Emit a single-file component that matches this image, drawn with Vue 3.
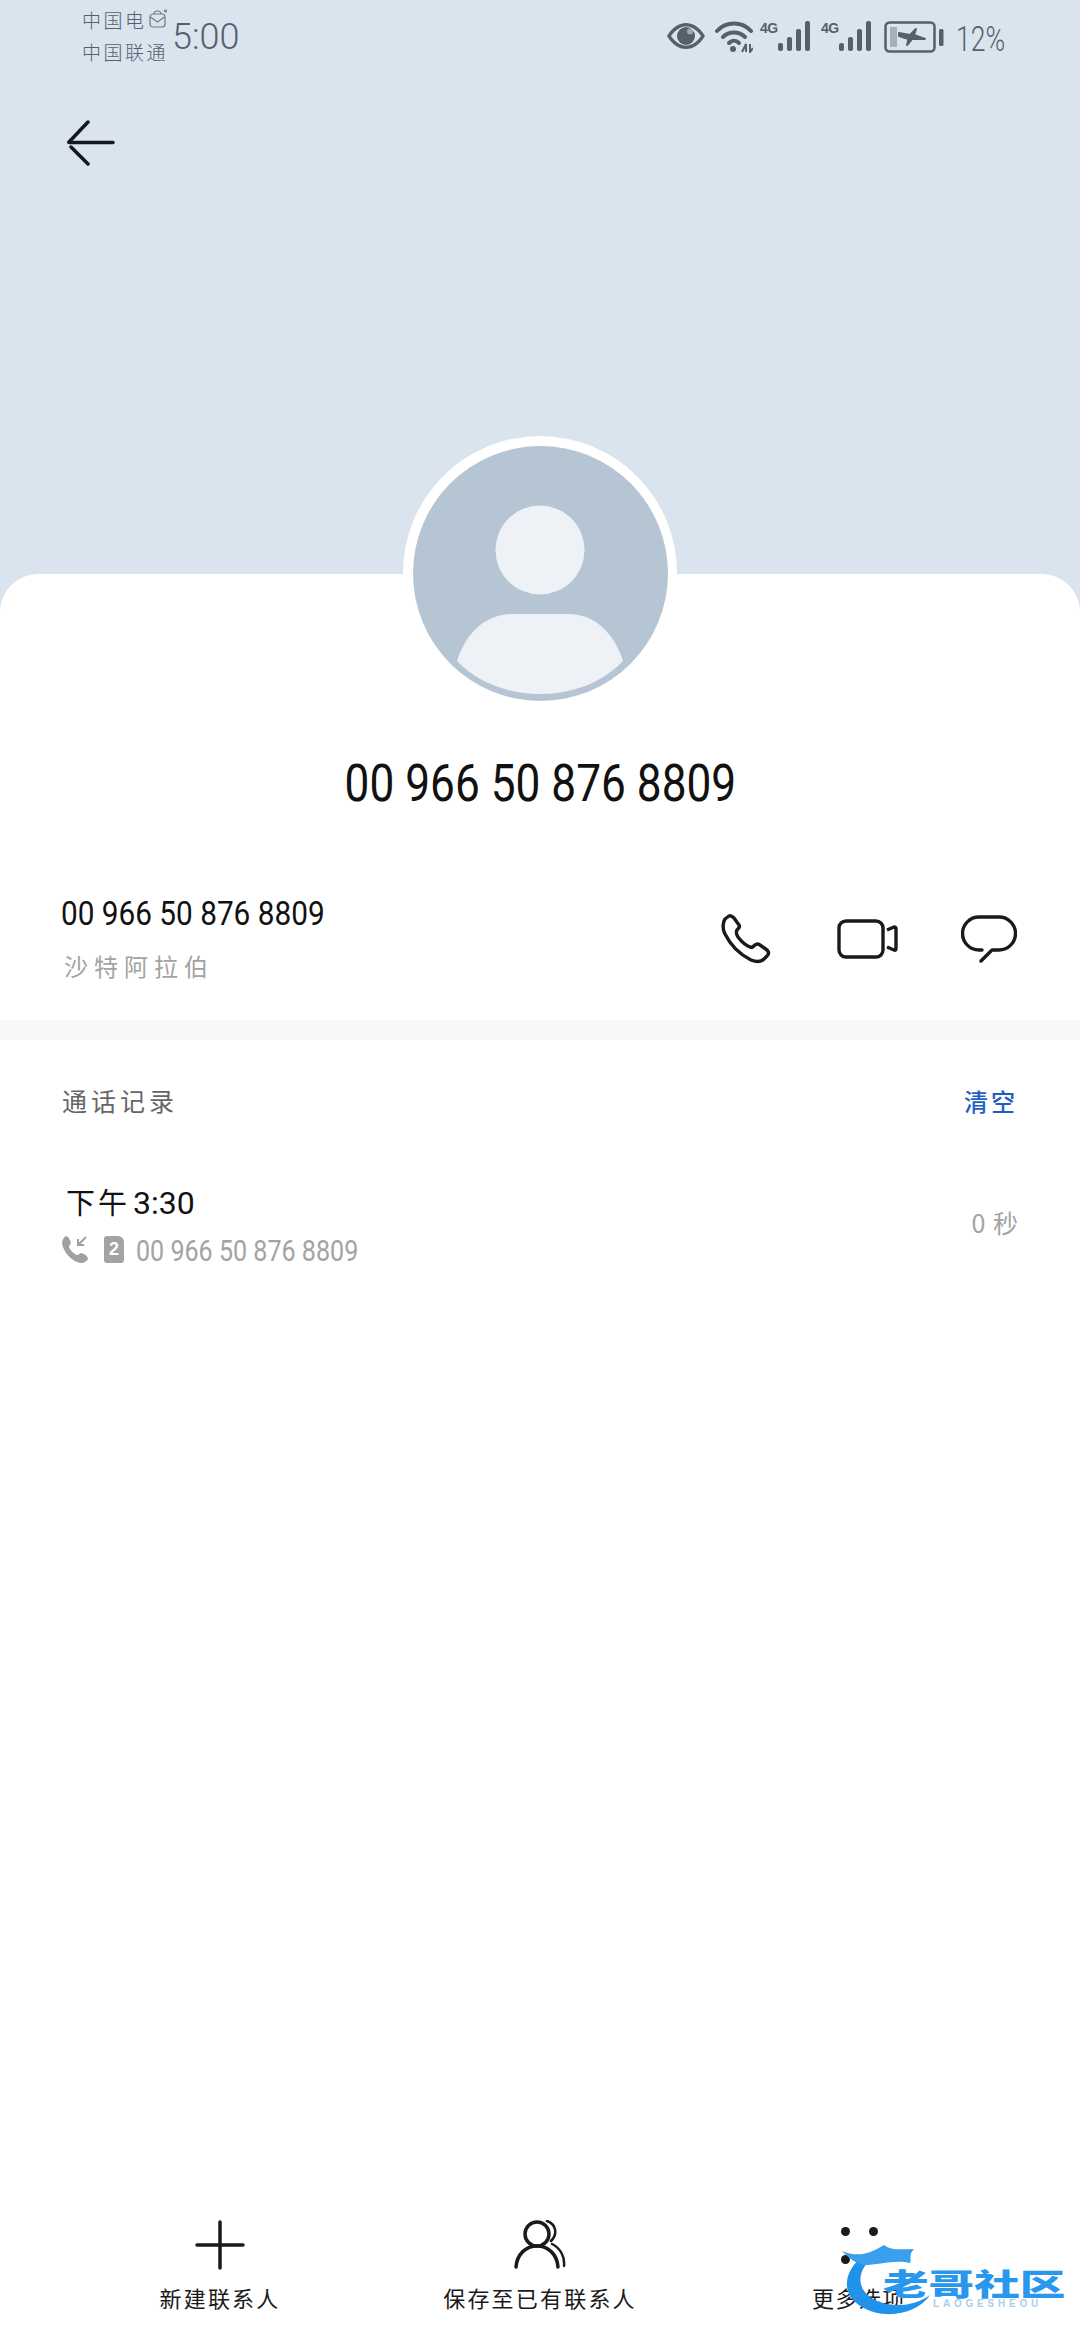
<script setup>
const number = '00 966 50 876 8809'
const bars = [8, 14, 22, 30]
</script>

<template>
  <div class="page">
    <header class="hero">
      <div class="status">
        <div class="carriers">
          <div class="carrier">
            <span>中国电</span>
            <svg class="mail" width="20" height="20" viewBox="0 0 20 20" fill="none" stroke="#6f7a85" stroke-width="1.2">
              <rect x="2" y="5" width="15" height="13" rx="3" />
              <path d="M2.5 8 L9.5 13 L16.5 8" />
              <circle cx="17.5" cy="2" r="1" />
              <path d="M6 5 a3.5 3 0 0 1 7 0" />
            </svg>
          </div>
          <div class="carrier">中国联通</div>
        </div>
        <div class="time">5:00</div>
        <div class="status-right">
          <svg class="eye" width="38" height="26" viewBox="0 0 38 26">
            <path d="M0 13 C6 3 13 0 19 0 C25 0 32 3 38 13 C32 23 25 26 19 26 C13 26 6 23 0 13 Z M4 13 C9 20 14 22.500 19 22.500 C24 22.500 29 20 34 13 C29 6 24 3.500 19 3.500 C14 3.500 9 6 4 13 Z" fill="#56606b" fill-rule="evenodd" />
            <circle cx="19" cy="13" r="9" fill="#56606b" />
            <circle cx="23" cy="8.500" r="3" fill="#d9e4ee" opacity=".55" />
          </svg>
          <svg class="wifi" width="38" height="33" viewBox="0 0 38 33" fill="none" stroke="#56606b" stroke-width="4" stroke-linecap="round">
            <path d="M2 11 C11 1 27 1 36 11" />
            <path d="M8 17 C14 11 24 11 30 17" />
            <path d="M14 23 C17 20 21 20 24 23" />
            <circle cx="18" cy="29" r="3" fill="#56606b" stroke="none" />
            <path d="M27 32 L31 24 V32 M35 24 V32 L38 28" stroke-width="2" stroke-linecap="butt" />
          </svg>
          <div v-for="n in 2" :key="n" class="signal">
            <span class="g4">4G</span>
            <div class="bars">
              <i v-for="h in bars" :key="h" class="bar" :style="{ height: h + 'px' }"></i>
            </div>
          </div>
          <svg class="battery" width="60" height="32" viewBox="0 0 60 32">
            <rect x="1.500" y="1.500" width="49" height="29" rx="4" fill="none" stroke="#56606b" stroke-width="2.500" />
            <rect x="6" y="6" width="7" height="20" fill="#a7b0b9" />
            <path d="M15 12 L26 14 L32 8 L30 14 L41 18 L28 18 L23 24 L24.500 18 L15 15 Z" fill="#56606b" stroke="#56606b" stroke-width="2" stroke-linejoin="round" />
            <rect x="55" y="8" width="4.500" height="17" rx="1.500" fill="#56606b" />
          </svg>
          <div class="percent"><span>12%</span></div>
        </div>
      </div>
      <svg class="back" width="50" height="46" viewBox="0 0 50 46" fill="none" stroke="#14181c" stroke-width="3.500" stroke-linecap="round">
        <path d="M3 22.500 H47" />
        <path d="M3 22 L22 2" />
        <path d="M5 27 L22 44" />
      </svg>
    </header>

    <main class="panel">
      <div class="avatar-ring">
        <svg width="255" height="255" viewBox="0 0 255 255">
          <circle cx="127.500" cy="127.500" r="127.500" fill="#b6c5d4" />
          <circle cx="127" cy="104" r="44.500" fill="#eef2f6" />
          <path d="M44 215 C52 190 70 168 100 168 H155 C184 168 202 190 210 215 C190 236 160 248 127.500 248 C95 248 64 236 44 215 Z" fill="#eef2f6" />
        </svg>
      </div>

      <h1 class="title"><span class="squeeze center">{{ number }}</span></h1>

      <section class="contact">
        <div class="contact-text">
          <div class="contact-num"><span class="squeeze">{{ number }}</span></div>
          <div class="region">沙特阿拉伯</div>
        </div>
        <div class="actions">
          <svg width="50" height="50" viewBox="0 0 50 50" fill="none" stroke="#1a1a1a" stroke-width="3.400" stroke-linejoin="round">
            <path d="M8 2 C10 1 12 3 13 4 L18 11 C19 13 18 14 16 16 C15 18 15 20 17 23 C20 27 24 31 29 33 C31 34 32 33 34 31 C36 30 37 29 39 31 L46 36 C48 38 48 40 46 42 L43 45 C40 48 35 48 30 46 C20 41 10 32 4 20 C1 14 2 8 4 5 Z" />
          </svg>
          <svg class="video" width="61" height="40" viewBox="0 0 61 40" fill="none" stroke="#1a1a1a" stroke-width="3.400" stroke-linejoin="round">
            <rect x="2" y="2" width="44" height="36" rx="7" />
            <path d="M50 11 L57 8 Q59 8 59 10 V29 Q59 32 57 31 L50 28" />
          </svg>
          <svg width="56" height="48" viewBox="0 0 56 48" fill="none" stroke="#1a1a1a" stroke-width="3.400" stroke-linecap="round" stroke-linejoin="round">
            <path d="M21 35 H18 A16.500 16.500 0 0 1 18 2 H38 A16.500 16.500 0 0 1 38 35 H31 L20 46" />
          </svg>
        </div>
      </section>

      <div class="band"></div>

      <section class="log-head">
        <span class="log-title">通话记录</span>
        <span class="clear">清空</span>
      </section>

      <section class="log-row">
        <div>
          <div class="log-time">下午<span class="log-clock">3:30</span></div>
          <div class="log-meta">
            <svg width="27" height="27" viewBox="0 0 27 27" fill="#a0a0a0">
              <path d="M4 0 C6 0 8 4 9 6 C9 8 7 9 7 11 C8 14 12 18 15 19 C17 19 18 17 20 17 C22 18 26 20 26 23 C25 25 22 27 19 27 C10 26 1 16 0 7 C0 4 2 1 4 0 Z" />
              <path d="M24 1 L16 9 M16 3 V9 H22" fill="none" stroke="#a0a0a0" stroke-width="2" />
            </svg>
            <span class="sim">2</span>
            <span class="log-num"><span class="squeeze">{{ number }}</span></span>
          </div>
        </div>
        <div class="duration">0 秒</div>
      </section>

      <nav class="bottom">
        <div class="tool tool-new">
          <svg width="50" height="50" viewBox="0 0 50 50" stroke="#1a1a1a" stroke-width="3.500" stroke-linecap="round">
            <path d="M25 2 V48 M2 25 H48" />
          </svg>
          <span>新建联系人</span>
        </div>
        <div class="tool tool-save">
          <svg width="52" height="50" viewBox="0 0 52 50" fill="none" stroke="#1a1a1a" stroke-width="3.500" stroke-linecap="round">
            <circle cx="23" cy="14" r="12" />
            <path d="M2 47 C3 34 12 26 23 26 C34 26 43 34 44 47" />
            <path d="M33 1 C42 4 44 14 37 21" stroke-width="2.500" />
            <path d="M38 24 C46 28 51 36 50 46" stroke-width="2.500" />
          </svg>
          <span>保存至已有联系人</span>
        </div>
        <div class="tool tool-more">
          <div class="dots"><i></i><i></i><i></i><i></i></div>
          <span>更多选项</span>
        </div>
      </nav>
    </main>

    <div class="watermark">
      <svg width="100" height="76" viewBox="0 0 100 76">
        <path d="M22 12 C6 24 -2 48 22 62 C46 76 78 68 90 50 C74 62 48 64 30 52 C16 42 18 24 32 14 Z" fill="#2192ea" />
        <path d="M2 6 C20 14 34 6 44 0 C52 6 62 4 74 4 C68 10 72 14 70 18 C56 14 38 20 24 20 C14 18 8 12 2 6 Z" fill="#3aa0ee" />
      </svg>
      <div class="wm-name">老哥社区</div>
      <div class="wm-latin">LAOGESHEOU</div>
    </div>
  </div>
</template>

<style scoped>
.page {
  position: relative;
  width: 1080px;
  height: 2340px;
  display: flex;
  flex-direction: column;
  background: #d9e4ee;
  overflow: hidden;
  font-family: "Noto Sans CJK SC", "Noto Sans", sans-serif;
  font-weight: 400;
}
.hero {
  height: 574px;
  flex: none;
  display: flex;
  flex-direction: column;
}
.status {
  height: 72px;
  box-sizing: border-box;
  display: flex;
  align-items: flex-start;
  padding: 4px 75px 0 82px;
  color: #56606b;
}
.carriers {
  width: 90px;
  flex: none;
  font-size: 19px;
  font-weight: 300;
  line-height: 32px;
  letter-spacing: 2.500px;
  white-space: nowrap;
}
.carrier {
  display: flex;
  align-items: center;
  gap: 1px;
}
.mail {
  margin-top: -3px;
}
.time {
  font-family: Roboto, sans-serif;
  font-weight: 300;
  font-size: 36px;
  line-height: 42px;
  margin-top: 12px;
}
.status-right {
  margin-left: auto;
  display: flex;
  align-items: flex-start;
  padding-top: 16px;
}
.eye {
  margin-top: 3px;
}
.wifi {
  margin-left: 10px;
}
.signal {
  display: flex;
  width: 51px;
  margin-left: 7px;
  align-items: flex-start;
}
.signal + .signal {
  margin-left: 10px;
}
.g4 {
  width: 18px;
  font-family: "Liberation Sans", sans-serif;
  font-weight: 700;
  font-size: 14px;
  line-height: 14px;
  letter-spacing: -.5px;
  margin-top: 1px;
}
.bars {
  display: flex;
  align-items: flex-end;
  gap: 4px;
  height: 31px;
}
.bar {
  width: 5px;
  background: #56606b;
  border-radius: 2px;
}
.battery {
  margin-left: 12px;
  margin-top: 1px;
}
.percent {
  width: 49px;
  margin-left: 12px;
  font-family: Roboto, sans-serif;
  font-size: 35px;
  line-height: 40px;
  font-weight: 300;
}
.percent span {
  display: inline-block;
  transform: scaleX(.76);
  transform-origin: left center;
}
.back {
  margin: 48px 0 0 66px;
}
.panel {
  position: relative;
  flex: 1;
  display: flex;
  flex-direction: column;
  background: #fff;
  border-radius: 38px 38px 0 0;
}
.avatar-ring {
  position: absolute;
  left: 403px;
  top: -138px;
  width: 255px;
  height: 255px;
  padding: 9.500px;
  background: #fff;
  border-radius: 50%;
}
.avatar-ring svg {
  display: block;
}
.squeeze {
  display: inline-block;
  white-space: nowrap;
  transform-origin: left center;
  font-family: Roboto, sans-serif;
}
.squeeze.center {
  transform-origin: center;
}
.title {
  margin: 0;
  padding-top: 175px;
  height: 111px;
  box-sizing: content-box;
  text-align: center;
  font-size: 52px;
  line-height: 60px;
  font-weight: 400;
  color: #111;
}
.title .squeeze {
  transform: scaleX(.85);
}
.contact {
  height: 160px;
  flex: none;
  box-sizing: border-box;
  padding: 0 63px 0 61px;
  display: flex;
  justify-content: space-between;
  align-items: flex-start;
}
.contact-text {
  padding-top: 29px;
}
.contact-num {
  font-size: 34px;
  line-height: 44px;
  color: #111;
}
.contact-num .squeeze {
  transform: scaleX(.875);
}
.region {
  margin-top: 13px;
  font-size: 24px;
  line-height: 36px;
  letter-spacing: 6px;
  color: #a3a3a3;
  padding-left: 3px;
}
.actions {
  display: flex;
  align-items: center;
  gap: 63px;
  padding-top: 54px;
}
.video {
  margin-left: 3px;
}
.band {
  height: 20px;
  flex: none;
  background: #f7f7f7;
}
.log-head {
  height: 100px;
  box-sizing: border-box;
  flex: none;
  padding: 20px 62px 0 62px;
  display: flex;
  justify-content: space-between;
  align-items: center;
  font-size: 25px;
  letter-spacing: 4px;
}
.log-title {
  color: #666;
}
.clear {
  color: #1f5fc4;
  font-weight: 500;
  font-size: 24px;
  letter-spacing: 3px;
}
.log-row {
  padding: 40px 61px 0 62px;
  display: flex;
  justify-content: space-between;
  align-items: center;
}
.log-time {
  padding-left: 4px;
  font-size: 29px;
  line-height: 42px;
  letter-spacing: 3px;
  color: #111;
}
.log-clock {
  font-family: Roboto, sans-serif;
  font-size: 32px;
  letter-spacing: 0;
  margin-left: 3px;
}
.log-meta {
  display: flex;
  align-items: center;
  height: 30px;
  margin-top: 10px;
}
.sim {
  width: 20px;
  height: 27px;
  margin-left: 15px;
  background: #a3a3a3;
  color: #fff;
  border-radius: 3px 6px 3px 3px;
  font-family: "Liberation Sans", sans-serif;
  font-weight: 700;
  font-size: 18px;
  line-height: 27px;
  text-align: center;
}
.log-num {
  margin-left: 12px;
  font-size: 29px;
  line-height: 30px;
  color: #a3a3a3;
}
.log-num .squeeze {
  transform: scaleX(.865);
}
.duration {
  font-size: 25px;
  color: #a3a3a3;
  letter-spacing: 1px;
}
.bottom {
  margin-top: auto;
  height: 120px;
  flex: none;
  display: flex;
  padding-left: 160px;
}
.tool {
  flex: none;
  display: flex;
  flex-direction: column;
  align-items: center;
  font-size: 22px;
  line-height: 30px;
  letter-spacing: 2.200px;
  color: #1a1a1a;
  white-space: nowrap;
  gap: 12px;
}
.tool-new { width: 120px; }
.tool-save { width: 196px; margin-left: 162px; }
.tool-more { width: 92px; margin-left: 175px; }
.tool-more span {
  letter-spacing: 1.500px;
}
.dots {
  width: 37px;
  height: 50px;
  display: grid;
  grid-template-columns: 9px 9px;
  justify-content: space-between;
  align-content: start;
  row-gap: 19px;
  padding-top: 7px;
  box-sizing: border-box;
}
.dots i {
  width: 9px;
  height: 9px;
  background: #1a1a1a;
  border-radius: 50%;
}
.watermark {
  position: absolute;
  left: 840px;
  top: 2245px;
  width: 225px;
  height: 72px;
}
.wm-name {
  position: absolute;
  left: 43px;
  top: 22px;
  font-size: 30px;
  line-height: 30px;
  font-weight: 900;
  white-space: nowrap;
  color: #2a97ee;
  transform: scaleX(1.52);
  transform-origin: left center;
}
.wm-latin {
  position: absolute;
  left: 93px;
  top: 53px;
  font-family: "Liberation Sans", sans-serif;
  font-size: 10px;
  line-height: 12px;
  letter-spacing: 3.800px;
  color: #a9cff0;
  font-weight: 700;
}
</style>
